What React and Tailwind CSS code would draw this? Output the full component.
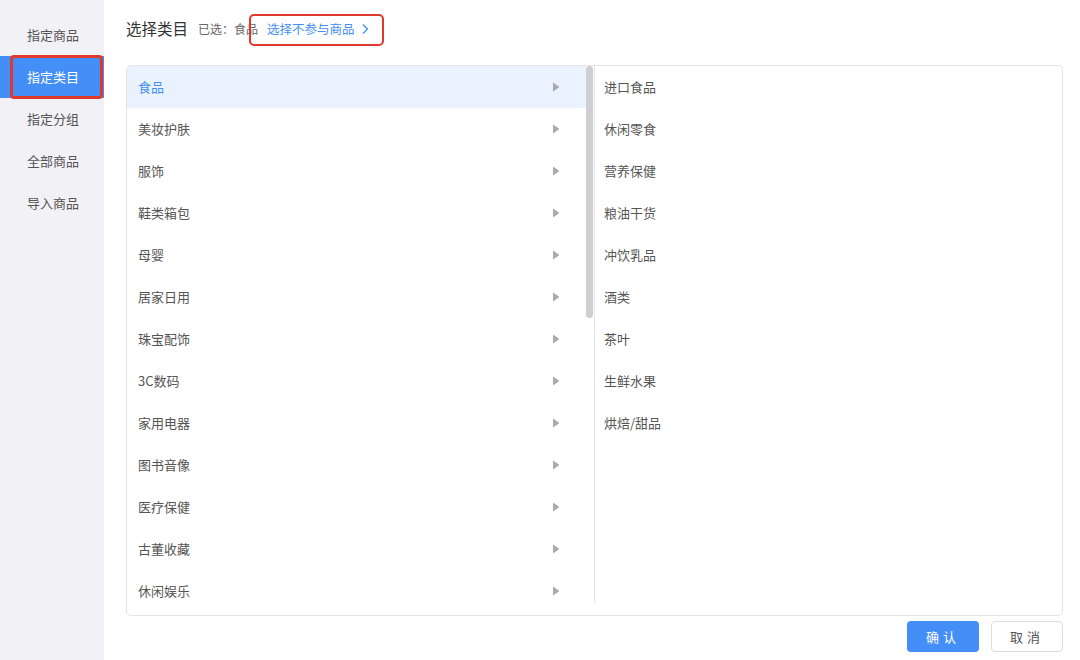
import React from 'react';

const menu = ['指定商品', '指定类目', '指定分组', '全部商品', '导入商品'];
const cats = ['食品', '美妆护肤', '服饰', '鞋类箱包', '母婴', '居家日用', '珠宝配饰', '3C数码', '家用电器', '图书音像', '医疗保健', '古董收藏', '休闲娱乐'];
const subs = ['进口食品', '休闲零食', '营养保健', '粮油干货', '冲饮乳品', '酒类', '茶叶', '生鲜水果', '烘焙/甜品'];

const font = { fontFamily: '"Noto Sans CJK SC", "Noto Sans", sans-serif' };

const App = () => {
  return (
    <div className="flex w-[1080px] h-[660px] bg-white overflow-hidden" style={font}>
      {/* Sidebar */}
      <div className="w-[104px] shrink-0 bg-[#f2f1f6] pt-[14px]">
        {menu.map((m, i) => (
          <div
            key={m}
            className={
              i === 1
                ? 'relative h-[42px] flex items-center pl-[27px] bg-[#448ef7] text-white text-[13px]'
                : 'h-[42px] flex items-center pl-[27px] text-[#555] text-[13px]'
            }
          >
            {m}
            {i === 1 && (
              <div className="absolute left-[10px] right-[1px] -top-[1px] -bottom-[1px] border-[3px] border-[#e0392b] rounded-[4px]" />
            )}
          </div>
        ))}
      </div>

      {/* Main */}
      <div className="flex-1 flex flex-col pl-[22px] pr-[17px]">
        <div className="h-[65px] flex items-center pb-[7px]">
          <span className="text-[15.5px] text-[#333]">选择类目</span>
          <span className="ml-[10px] text-[12px] text-[#666]">已选：食品</span>
          <span className="relative ml-[9px] flex items-center text-[12.5px] text-[#448ef7]">
            选择不参与商品
            <svg width="10" height="12" viewBox="0 0 10 12" className="ml-[5px]">
              <path d="M3 1.5 L7.5 6 L3 10.5" fill="none" stroke="#448ef7" strokeWidth="1.3" />
            </svg>
            <span className="absolute -left-[18px] -right-[14px] -top-[6px] -bottom-[8px] border-[2.5px] border-[#e0392b] rounded-[5px]" />
          </span>
        </div>

        <div className="h-[551px] flex border border-[#e4e4e8] rounded-[5px] overflow-hidden">
          <div className="w-[468px] relative flex">
            <div className="flex-1 overflow-hidden">
              {cats.map((c, i) => (
                <div
                  key={c}
                  className={
                    i === 0
                      ? 'h-[42px] flex items-center justify-between pl-[11px] pr-[26px] bg-[#e9f2fe] text-[#448ef7] text-[13px]'
                      : 'h-[42px] flex items-center justify-between pl-[11px] pr-[26px] text-[#555] text-[13px]'
                  }
                >
                  <span>{c}</span>
                  <svg width="8" height="10" viewBox="0 0 8 10">
                    <path d="M1 0.5 L7.5 5 L1 9.5 Z" fill="#a9a9b3" />
                  </svg>
                </div>
              ))}
            </div>
            <div className="w-[8px] shrink-0 flex flex-col">
              <div className="h-[252px] w-[7px] bg-[#cfcfd3] rounded-full" />
            </div>
            <div className="w-px shrink-0 bg-[#e4e4e8] mb-[12px]" />
          </div>
          <div className="flex-1">
            {subs.map((s) => (
              <div key={s} className="h-[42px] flex items-center pl-[9px] text-[#555] text-[13px]">
                {s}
              </div>
            ))}
          </div>
        </div>

        <div className="flex justify-end gap-[12px] mt-[5px]">
          <button className="w-[72px] h-[31px] rounded-[4px] bg-[#448ef7] text-white text-[13px] tracking-[4px]">确认</button>
          <button className="w-[72px] h-[31px] rounded-[4px] border border-[#dcdce0] bg-white text-[#555] text-[13px] tracking-[4px]">取消</button>
        </div>
      </div>
    </div>
  );
};

export default App;
